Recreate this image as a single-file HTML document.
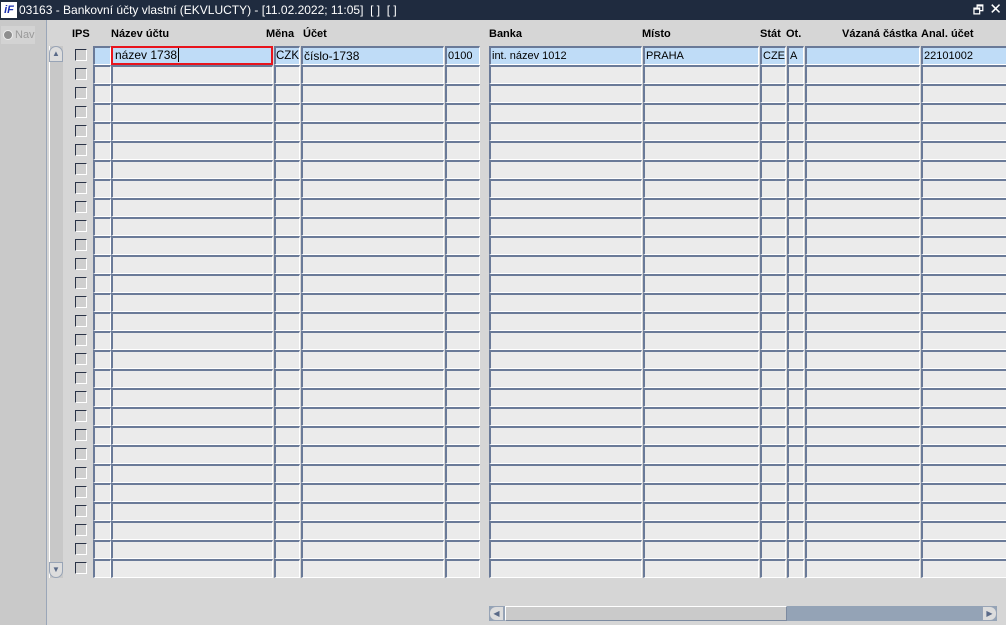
<!DOCTYPE html>
<html><head><meta charset="utf-8">
<style>
*{margin:0;padding:0;box-sizing:border-box}
body{width:1006px;height:625px;overflow:hidden;background:#d6d6d6;font-family:"Liberation Sans",Arial,sans-serif;position:relative}
.title{position:absolute;left:0;top:0;width:1006px;height:20px;background:#1f2b3f;color:#fff;font-size:12px;line-height:20px;padding-left:19px;white-space:nowrap}
.logo{position:absolute;left:1px;top:2px;width:16px;height:16px;background:#fff;color:#1a2fb0;font-weight:bold;font-style:italic;font-size:11px;line-height:16px;text-align:center}
.left{position:absolute;left:0;top:20px;width:47px;height:605px;background:#c9c9c9;border-right:1px solid #9aa6b8}
.nav{position:absolute;left:1px;top:6px;width:34px;height:18px;background:#d3d3d3;color:#9a9a9a;font-size:11px;line-height:18px;padding-left:14px}
.nav:before{content:"";position:absolute;left:2px;top:4px;width:8px;height:8px;border-radius:50%;background:#8e8e8e;border:1px solid #eee}
.h{position:absolute;top:28px;font-size:11px;font-weight:bold;color:#000;white-space:nowrap}
.f{position:absolute;height:19px;background:#ebebeb;border-top:2px solid #6a7a98;border-left:2px solid #6a7a98;border-right:1px solid #fff;border-bottom:1px solid #fff;font-size:11px;line-height:17px;padding-left:1px;white-space:nowrap;overflow:hidden}
.b{background:#bfdcf7}
.cb{position:absolute;left:75px;width:12px;height:12px;background:#cfcfcf;border-top:1px solid #2a3346;border-left:1px solid #2a3346;border-right:1px solid #fff;border-bottom:1px solid #fff}
.vs{position:absolute;left:49px;top:46px;width:14px;height:532px;background:#c8c8c8;border-left:1px solid #fff}
.hs{position:absolute;left:489px;top:606px;width:508px;height:15px;background:#94a3b6}
</style></head><body>
<div class="title"><div class="logo">iF</div>03163 - Bankovní účty vlastní (EKVLUCTY) - [11.02.2022; 11:05]&nbsp; [ ]&nbsp; [ ]
<span style="position:absolute;right:22px;top:0;font-size:12px">&#x1F5D7;</span><span style="position:absolute;right:4px;top:0;font-size:15px">✕</span></div>
<div class="left"><div class="nav">Nav</div></div>
<div class="h" style="left:72px">IPS</div>
<div class="h" style="left:111px">Název účtu</div>
<div class="h" style="left:266px">Měna</div>
<div class="h" style="left:303px">Účet</div>
<div class="h" style="left:489px">Banka</div>
<div class="h" style="left:642px">Místo</div>
<div class="h" style="left:760px">Stát</div>
<div class="h" style="left:786px">Ot.</div>
<div class="h" style="left:842px">Vázaná částka</div>
<div class="h" style="left:921px">Anal. účet</div>
<div class="vs"></div>
<div style="position:absolute;left:49px;top:46px;width:14px;height:16px;background:#ddd;border:1px solid #98a4b6;border-radius:7px 7px 0 0;font-size:8px;color:#5a6a88;text-align:center;line-height:14px">▲</div>
<div style="position:absolute;left:49px;top:562px;width:14px;height:16px;background:#ddd;border:1px solid #98a4b6;border-radius:0 0 7px 7px;font-size:8px;color:#5a6a88;text-align:center;line-height:14px">▼</div>
<div class="hs"></div>
<div style="position:absolute;left:505px;top:606px;width:282px;height:15px;background:#cacaca;border:1px solid #7c8aa0;border-top-color:#fff;border-left-color:#fff"></div>
<div style="position:absolute;left:489px;top:606px;width:15px;height:15px;background:#ddd;border:1px solid #98a4b6;border-radius:7px 0 0 7px;font-size:8px;color:#5a6a88;text-align:center;line-height:13px">◀</div>
<div style="position:absolute;left:982px;top:606px;width:15px;height:15px;background:#ddd;border:1px solid #98a4b6;border-radius:0 7px 7px 0;font-size:8px;color:#5a6a88;text-align:center;line-height:13px">▶</div>
<div id="g"></div>
<script>
var cols=[[93,18],[111,162],[274,26],[301,143],[445,35],[489,153],[643,116],[760,26],[787,17],[805,115],[921,90]];
var vals=["","název 1738","CZK","číslo-1738","0100","int. název 1012","PRAHA","CZE","A","","22101002"];
var h="";
for(var r=0;r<28;r++){var y=46+r*19;
h+='<div class="cb" style="top:'+(y+3)+'px"></div>';
for(var c=0;c<cols.length;c++){var s='left:'+cols[c][0]+'px;top:'+y+'px;width:'+cols[c][1]+'px;';
var fs=(c==1||c==3)?'font-size:12px;':(c==2?'font-size:11.5px;padding-left:0;':'');
if(r==0&&c==1){h+='<div class="f b" style="'+s+'border:2px solid #e8141c;padding-left:2px;font-size:12px;line-height:15px">název 1738<span style="border-left:1px solid #000;margin-left:1px"></span></div>';continue;}
h+='<div class="f'+(r==0?' b':'')+'" style="'+s+fs+'">'+(r==0?vals[c]:'')+'</div>';}}
document.getElementById('g').innerHTML=h;
</script>
</body></html>
